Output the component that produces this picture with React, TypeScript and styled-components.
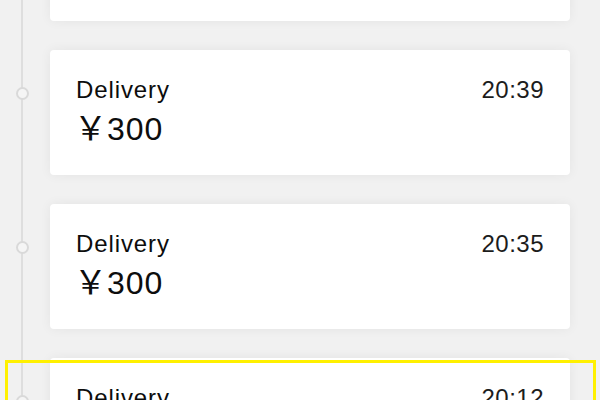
import React from 'react';
import styled, { createGlobalStyle } from 'styled-components';

const GlobalStyle = createGlobalStyle`
  html, body {
    margin: 0;
    padding: 0;
    background: #f1f1f1;
  }
  body {
    font-family: "Liberation Sans", "Noto Sans CJK SC", Arial, sans-serif;
    color: #0d0d0d;
  }
`;

interface Order {
  id: number;
  title: string;
  amount: number;
  time: string;
}

const ORDERS: Order[] = [
  { id: 1, title: 'Delivery', amount: 300, time: '20:44' },
  { id: 2, title: 'Delivery', amount: 300, time: '20:39' },
  { id: 3, title: 'Delivery', amount: 300, time: '20:35' },
  { id: 4, title: 'Delivery', amount: 300, time: '20:12' },
];

// the list is scrolled: first card mostly above the viewport
const Viewport = styled.div`
  position: relative;
  width: 600px;
  height: 400px;
  overflow: hidden;
  background: #f1f1f1;
`;

const Timeline = styled.div`
  position: relative;
  margin-top: -104px;
  display: flex;
  flex-direction: column;
  gap: 29px;
  padding-right: 30px;

  &::before {
    content: '';
    position: absolute;
    left: 21px;
    top: 0;
    bottom: 0;
    width: 2px;
    background: #dedede;
  }
`;

const Row = styled.div`
  position: relative;
  display: flex;
  align-items: flex-start;
`;

const Rail = styled.div`
  width: 50px;
  flex: none;
  display: flex;
  justify-content: center;
  padding-top: 37px;
  padding-right: 6px;
  box-sizing: border-box;
`;

const Dot = styled.span`
  position: relative;
  z-index: 1;
  width: 13px;
  height: 13px;
  border-radius: 50%;
  border: 2px solid #d9d9d9;
  background: #f5f5f5;
  box-sizing: border-box;
  margin-left: 1px;
`;

const Card = styled.div`
  flex: 1;
  height: 125px;
  box-sizing: border-box;
  background: #fff;
  border-radius: 4px;
  box-shadow: 0 0 12px rgba(0, 0, 0, 0.06);
  padding: 26px 26px 0 26px;
  display: flex;
  justify-content: space-between;
`;

const Info = styled.div`
  display: flex;
  flex-direction: column;
`;

const Title = styled.div`
  font-size: 24px;
  line-height: 28px;
  letter-spacing: 0.9px;
`;

const Amount = styled.div`
  margin-top: 4px;
  font-size: 32px;
  line-height: 36px;
  letter-spacing: 1px;
`;

const Yen = styled.span`
  font-family: "Noto Sans CJK SC", sans-serif;
  font-size: 33px;
  margin-left: -2px;
  margin-right: -1px;
`;

const Time = styled.div`
  font-size: 24px;
  line-height: 28px;
  letter-spacing: 0.5px;
  color: #1c1c1c;
`;

const Highlight = styled.div<{ $top: number }>`
  position: absolute;
  left: 5px;
  right: 4px;
  top: ${(p) => p.$top}px;
  height: 120px;
  border: 3px solid #fff000;
  pointer-events: none;
`;

const OrderRow: React.FC<{ order: Order }> = ({ order }) => (
  <Row>
    <Rail>
      <Dot />
    </Rail>
    <Card>
      <Info>
        <Title>{order.title}</Title>
        <Amount>
          <Yen>￥</Yen>
          {order.amount}
        </Amount>
      </Info>
      <Time>{order.time}</Time>
    </Card>
  </Row>
);

export default function App() {
  return (
    <>
      <GlobalStyle />
      <Viewport>
        <Timeline>
          {ORDERS.map((o) => (
            <OrderRow key={o.id} order={o} />
          ))}
        </Timeline>
        <Highlight $top={360} />
      </Viewport>
    </>
  );
}
